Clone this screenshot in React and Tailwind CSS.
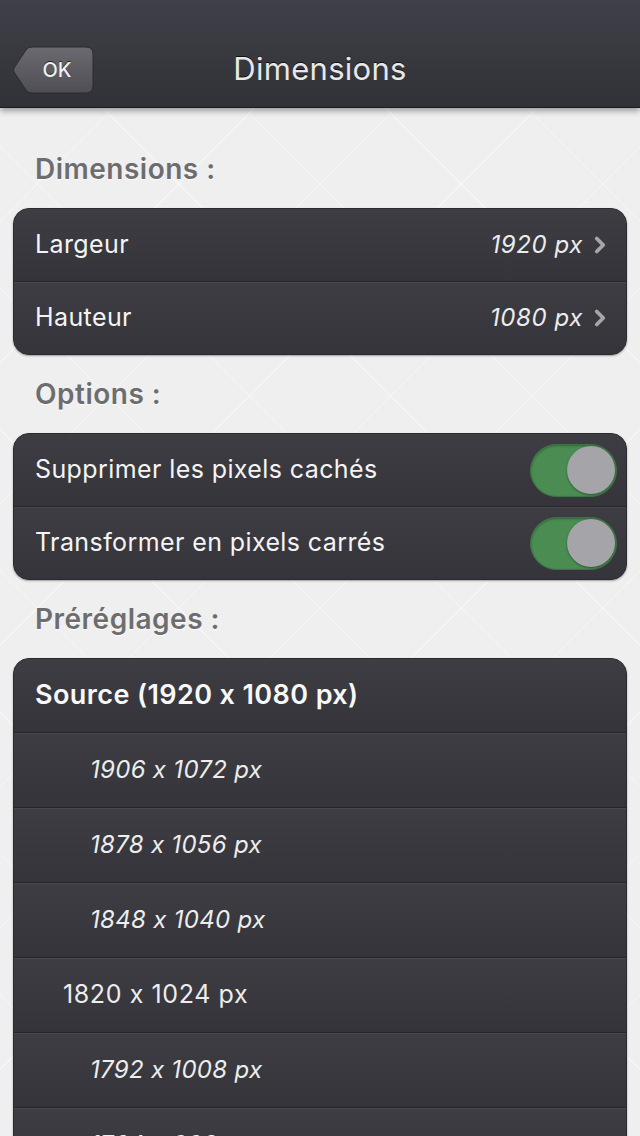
import { ChevronRight } from "lucide-react";

const font = { fontFamily: "Inter, Roboto, 'Noto Sans', sans-serif" };

const Toggle = () => (
  <div className="w-[87px] h-[53px] rounded-full bg-[#4a8c52] border border-[#3d7444] flex items-center justify-end pr-[1px] shadow-[inset_0_1px_2px_rgba(0,0,0,0.3)]">
    <div className="w-[48px] h-[48px] rounded-full bg-[#a5a5a9] shadow-[0_1px_2px_rgba(0,0,0,0.4)]" />
  </div>
);

const Row = ({ first, h = "h-[73px]", children, className = "" }) => (
  <div
    className={
      h +
      " flex items-center bg-gradient-to-b from-[#3d3d43] to-[#34343a] " +
      (first ? "" : "border-t border-[#26262a] shadow-[inset_0_1px_0_#48484e] ") +
      className
    }
  >
    {children}
  </div>
);

const Card = ({ children }) => (
  <div className="mx-[13px] rounded-[16px] overflow-hidden border border-[#2b2b2f] shadow-[0_1px_2px_rgba(0,0,0,0.35)] bg-[#38383e]">
    {children}
  </div>
);

const Label = ({ children }) => (
  <div className="h-[78px] flex items-center pl-[35px] text-[28px] font-semibold tracking-[0.5px] text-[#6d6d6f] [text-shadow:0_1px_0_#ffffff]">
    {children}
  </div>
);

const presets = [
  { t: "1906 x 1072 px", italic: true },
  { t: "1878 x 1056 px", italic: true },
  { t: "1848 x 1040 px", italic: true },
  { t: "1820 x 1024 px", italic: false },
  { t: "1792 x 1008 px", italic: true },
  { t: "1764 x 992 px", italic: true },
];

export default function App() {
  return (
    <div
      style={font}
      className="w-[640px] h-[1136px] overflow-hidden [font-feature-settings:'calt'_0] bg-[#efeff0] bg-[image:repeating-linear-gradient(45deg,transparent_0,transparent_99px,rgba(255,255,255,0.45)_99px,rgba(255,255,255,0.45)_100px),repeating-linear-gradient(-45deg,transparent_0,transparent_99px,rgba(255,255,255,0.45)_99px,rgba(255,255,255,0.45)_100px)]"
    >
      {/* header */}
      <div className="h-[108px] bg-gradient-to-b from-[#404148] to-[#313237] border-b border-[#1c1c1f] shadow-[0_3px_6px_rgba(0,0,0,0.35)] grid grid-cols-[1fr_auto_1fr] items-center pt-[32px] relative z-10">
        <div className="pl-[12px]">
          <button className="relative w-[82px] h-[48px] flex items-center justify-center">
            <svg className="absolute inset-0" width="82" height="48" viewBox="0 0 82 48">
              <defs>
                <linearGradient id="okg" x1="0" y1="0" x2="0" y2="1">
                  <stop offset="0" stopColor="#6a6a70" />
                  <stop offset="1" stopColor="#4e4e54" />
                </linearGradient>
              </defs>
              <path
                d="M20 1 H74 Q81 1 81 8 V40 Q81 47 74 47 H20 Q16 47 14 44 L2 26 Q1 24 2 22 L14 4 Q16 1 20 1 Z"
                fill="url(#okg)"
                stroke="#2a2a2e"
                strokeWidth="1"
              />
            </svg>
            <span className="relative pl-[8px] text-[20px] font-medium text-[#f0f0f0] [text-shadow:0_-1px_0_#222]">OK</span>
          </button>
        </div>
        <div className="text-[31px] tracking-[0.3px] text-[#e8e8ea] [text-shadow:0_-1px_0_#111]">Dimensions</div>
        <div />
      </div>

      <div className="h-[22px]" />
      <Label>Dimensions :</Label>
      <Card>
        {[
          ["Largeur", "1920 px"],
          ["Hauteur", "1080 px"],
        ].map(([k, v], i) => (
          <Row key={k} first={i === 0} h={i === 0 ? "h-[72px]" : "h-[73px]"} className="pl-[21px] pr-[13px] justify-between">
            <span className="text-[25px] tracking-[0.4px] text-[#f4f4f4]">{k}</span>
            <span className="flex items-center gap-[4px]">
              <span className="text-[24px] tracking-[0.6px] italic text-[#ececec]">{v}</span>
              <ChevronRight size={26} strokeWidth={3.5} className="text-[#a6a6a8]" />
            </span>
          </Row>
        ))}
      </Card>

      <Label>Options :</Label>
      <Card>
        {["Supprimer les pixels cachés", "Transformer en pixels carrés"].map((k, i) => (
          <Row key={k} first={i === 0} h={i === 0 ? "h-[72px]" : "h-[73px]"} className="pl-[21px] pr-[9px] justify-between">
            <span className="text-[25px] tracking-[0.4px] text-[#f4f4f4]">{k}</span>
            <Toggle />
          </Row>
        ))}
      </Card>

      <Label>Préréglages :</Label>
      <Card>
        <Row first h="h-[73px]" className="pl-[21px]">
          <span className="text-[27px] tracking-[0.4px] font-semibold text-[#f8f8f8]">Source (1920 x 1080 px)</span>
        </Row>
        {presets.map((p) => (
          <Row key={p.t} h="h-[75px]" className={p.italic ? "pl-[76px]" : "pl-[49px]"}>
            <span
              className={
                "text-[24px] text-[#ededed] " +
                (p.italic ? "italic tracking-[0.3px]" : "tracking-[0.6px] text-[25px]")
              }
            >
              {p.t}
            </span>
          </Row>
        ))}
      </Card>
    </div>
  );
}
